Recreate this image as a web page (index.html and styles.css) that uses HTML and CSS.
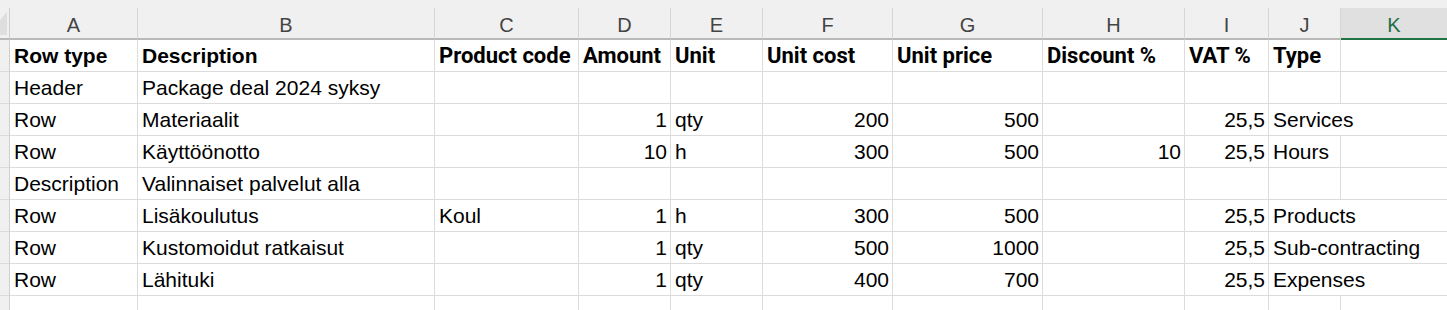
FILE: index.html
```html
<!DOCTYPE html>
<html lang="fi">
<head>
<meta charset="utf-8">
<title>Sheet</title>
<link rel="stylesheet" href="styles.css">
</head>
<body>
<div class="app">
  <div class="topband"></div>
  <div class="sheet">
    <div class="ch corner"><svg class="selall" width="9" height="30" viewBox="0 0 9 30"><polygon points="0,12 7,4 7,27 0,27" fill="#dedede"/></svg></div>
    <div class="ch">A</div><div class="ch">B</div><div class="ch">C</div><div class="ch">D</div><div class="ch">E</div><div class="ch">F</div><div class="ch">G</div><div class="ch">H</div><div class="ch">I</div><div class="ch">J</div><div class="ch active">K</div>

    <div class="rh"></div>
    <div class="c b ap">Row type</div><div class="c b ap">Description</div><div class="c b rb">Product code</div><div class="c b rb">Amount</div><div class="c b rb">Unit</div><div class="c b rb">Unit cost</div><div class="c b rb">Unit price</div><div class="c b rb">Discount %</div><div class="c b rb">VAT %</div><div class="c b rb">Type</div><div class="c k"></div>

    <div class="rh"></div>
    <div class="c ap">Header</div><div class="c ap">Package deal 2024 syksy</div><div class="c"></div><div class="c"></div><div class="c"></div><div class="c"></div><div class="c"></div><div class="c"></div><div class="c"></div><div class="c"></div><div class="c k"></div>

    <div class="rh"></div>
    <div class="c ap">Row</div><div class="c ap">Materiaalit</div><div class="c"></div><div class="c n">1</div><div class="c">qty</div><div class="c n">200</div><div class="c n">500</div><div class="c"></div><div class="c n">25,5</div><div class="c ov">Services</div><div class="c k"></div>

    <div class="rh"></div>
    <div class="c ap">Row</div><div class="c ap">Käyttöönotto</div><div class="c"></div><div class="c n">10</div><div class="c">h</div><div class="c n">300</div><div class="c n">500</div><div class="c n">10</div><div class="c n">25,5</div><div class="c">Hours</div><div class="c k"></div>

    <div class="rh"></div>
    <div class="c ap">Description</div><div class="c ap">Valinnaiset palvelut alla</div><div class="c"></div><div class="c"></div><div class="c"></div><div class="c"></div><div class="c"></div><div class="c"></div><div class="c"></div><div class="c"></div><div class="c k"></div>

    <div class="rh"></div>
    <div class="c ap">Row</div><div class="c ap">Lisäkoulutus</div><div class="c ap">Koul</div><div class="c n ap">1</div><div class="c ap">h</div><div class="c n ap">300</div><div class="c n ap">500</div><div class="c"></div><div class="c n ap">25,5</div><div class="c ov ap">Products</div><div class="c k"></div>

    <div class="rh"></div>
    <div class="c ap">Row</div><div class="c ap">Kustomoidut ratkaisut</div><div class="c"></div><div class="c n ap">1</div><div class="c ap">qty</div><div class="c n ap">500</div><div class="c n ap">1000</div><div class="c"></div><div class="c n ap">25,5</div><div class="c ov ap">Sub-contracting</div><div class="c k"></div>

    <div class="rh"></div>
    <div class="c ap">Row</div><div class="c ap">Lähituki</div><div class="c"></div><div class="c n ap">1</div><div class="c ap">qty</div><div class="c n ap">400</div><div class="c n ap">700</div><div class="c"></div><div class="c n ap">25,5</div><div class="c ov ap">Expenses</div><div class="c k"></div>

    <div class="rh"></div>
    <div class="c"></div><div class="c"></div><div class="c"></div><div class="c"></div><div class="c"></div><div class="c"></div><div class="c"></div><div class="c"></div><div class="c"></div><div class="c"></div><div class="c k"></div>
  </div>
</div>
</body>
</html>
```

FILE: styles.css
```css
* { box-sizing: border-box; }
html, body {
  margin: 0;
  padding: 0;
  background: #ffffff;
  overflow: hidden;
}
.app {
  width: 1447px;
  height: 310px;
  overflow: hidden;
  font-family: "Liberation Sans", Arial, sans-serif;
}
.topband {
  height: 8px;
  background: #f0f0f0;
}
.sheet {
  display: grid;
  grid-template-columns: 10px 128px 297px 144px 92px 92px 130px 150px 142px 84px 72px 1fr;
  grid-auto-rows: 32px;
}
.ch {
  background: #f0f0f0;
  border-right: 1px solid #d6d6d6;
  border-bottom: 2px solid #b9b9b9;
  text-align: center;
  font-size: 20px;
  line-height: 28px;
  padding-top: 3px;
  color: #444444;
}
.ch.corner {
  position: relative;
  border-right: 1px solid #cfcfcf;
}
.selall {
  position: absolute;
  left: 0;
  top: 0;
}
.ch.active {
  background: #e0e0e0;
  color: #1f6e43;
  border-bottom-color: #217346;
  border-right: none;
}
.rh {
  background: #f0f0f0;
  border-right: 1px solid #cfcfcf;
  border-bottom: 1px solid #dcdcdc;
}
.c {
  border-right: 1px solid #dcdcdc;
  border-bottom: 1px solid #dcdcdc;
  font-size: 21px;
  line-height: 27px;
  padding: 2px 4px 0 4px;
  color: #000000;
  white-space: nowrap;
  overflow: hidden;
}
.c.b { font-weight: bold; }
.c.rb {
  font-family: Roboto, "Liberation Sans", sans-serif;
  font-size: 22px;
}
.c.n { text-align: right; padding-right: 3px; }
.c.ov {
  overflow: visible;
  border-right: none;
  position: relative;
  z-index: 1;
}
.c.k {
  border-right: none;
  background: transparent;
}
```
